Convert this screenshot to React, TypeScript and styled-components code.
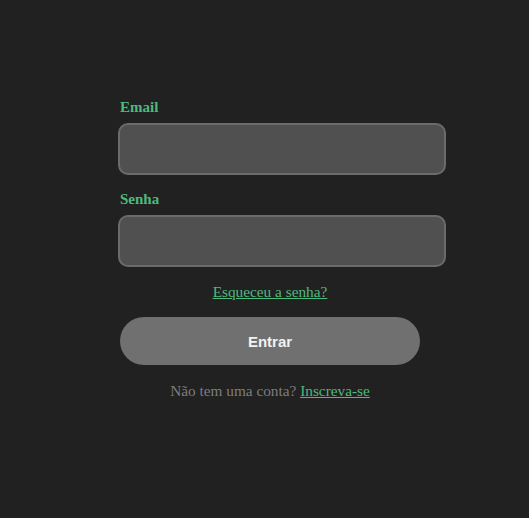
import React from 'react';
import styled, { createGlobalStyle } from 'styled-components';

const GlobalStyle = createGlobalStyle`
  html, body {
    margin: 0;
    background-color: #212121;
  }
  body {
    font-family: "Liberation Serif", "Times New Roman", serif;
  }
`;

export default function App() {
  return (
    <>
      <GlobalStyle />
      <Page>
        <Form onSubmit={(e) => e.preventDefault()}>
          <Field>
            <Label htmlFor="email">Email</Label>
            <Input id="email" type="email" />
          </Field>

          <Field>
            <Label htmlFor="senha">Senha</Label>
            <Input id="senha" type="password" />
          </Field>

          <CenterText>
            <GreenLink href="#">Esqueceu a senha?</GreenLink>
          </CenterText>

          <SubmitButton type="submit">Entrar</SubmitButton>

          <CenterText muted>
            Não tem uma conta? <GreenLink href="#">Inscreva-se</GreenLink>
          </CenterText>
        </Form>
      </Page>
    </>
  );
}

const Page = styled.div`
  min-height: 518px;
  padding: 99px 0 0 120px;
  box-sizing: border-box;
`;

const Form = styled.form`
  width: 300px;
  display: flex;
  flex-direction: column;
  gap: 16px;
`;

const Field = styled.div`
  display: flex;
  flex-direction: column;
  gap: 7px;
`;

const Label = styled.label`
  font-size: 15px;
  font-weight: bold;
  line-height: 17px;
  color: #4dba7d;
`;

const Input = styled.input`
  width: 328px;
  height: 52px;
  margin-left: -2px;
  box-sizing: border-box;
  padding: 0 12px;
  border: 2px solid #6b6b6b;
  border-radius: 10px;
  background-color: #505050;
  color: #ffffff;
  font-size: 15px;
  outline: none;
`;

const CenterText = styled.div<{ muted?: boolean }>`
  text-align: center;
  font-size: 15.3px;
  line-height: ${(p) => (p.muted ? '19px' : '17px')};
  color: ${(p) => (p.muted ? '#7d7d7d' : 'inherit')};
`;

const GreenLink = styled.a`
  color: #4dba7d;
  text-decoration: underline;
`;

const SubmitButton = styled.button`
  width: 300px;
  height: 48px;
  margin-top: 1px;
  border: none;
  border-radius: 24px;
  background-color: #707070;
  color: #f2f2f2;
  font-family: "Liberation Sans", Arial, sans-serif;
  font-size: 15px;
  font-weight: bold;
  cursor: pointer;
`;
